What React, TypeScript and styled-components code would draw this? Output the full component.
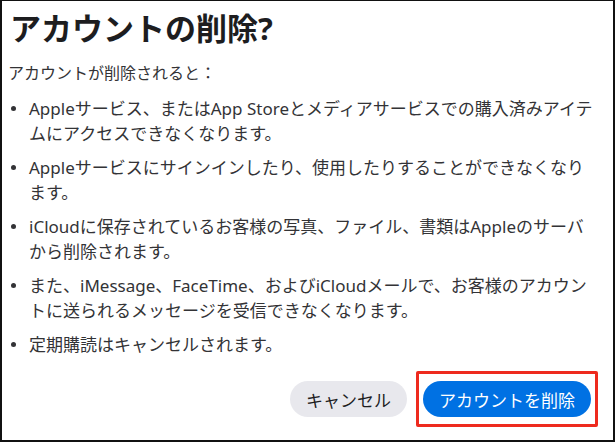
import styled, { createGlobalStyle } from 'styled-components';

const GlobalStyle = createGlobalStyle`
  html, body {
    margin: 0;
    padding: 0;
    background: #ffffff;
  }
  body {
    font-family: "Noto Sans", "Noto Sans CJK JP", sans-serif;
  }
`;

// 改行位置は元の画面に合わせる
const items: string[][] = [
  ['Appleサービス、またはApp Storeとメディアサービスでの購入済みアイテ', 'ムにアクセスできなくなります。'],
  ['Appleサービスにサインインしたり、使用したりすることができなくなり', 'ます。'],
  ['iCloudに保存されているお客様の写真、ファイル、書類はAppleのサーバ', 'から削除されます。'],
  ['また、iMessage、FaceTime、およびiCloudメールで、お客様のアカウン', 'トに送られるメッセージを受信できなくなります。'],
  ['定期購読はキャンセルされます。'],
];

export default function App() {
  return (
    <>
      <GlobalStyle />
      <DialogDiv>
        <TitleH1>アカウントの削除?</TitleH1>
        <IntroP>アカウントが削除されると：</IntroP>
        <ListUl>
          {items.map(lines => (
            <ItemLi key={lines[0]}>
              <BulletSpan />
              <ItemTextDiv>
                {lines.map(line => (
                  <LineSpan key={line}>{line}</LineSpan>
                ))}
              </ItemTextDiv>
            </ItemLi>
          ))}
        </ListUl>
        <FooterDiv>
          <PillButton variant="secondary">キャンセル</PillButton>
          {/* 強調表示の赤枠 */}
          <HighlightDiv>
            <PillButton variant="primary">アカウントを削除</PillButton>
          </HighlightDiv>
        </FooterDiv>
      </DialogDiv>
    </>
  );
}

const DialogDiv = styled.div`
  box-sizing: border-box;
  width: 615px;
  height: 442px;
  border-left: 2px solid #111;
  border-top: 1px solid #111;
  border-right: 2px solid #111;
  border-bottom: 2px solid #111;
  padding: 6px 15px 0 6px;
  display: flex;
  flex-direction: column;
  color: #333336;
`;

const TitleH1 = styled.h1`
  margin: 0 0 0 2px;
  font-size: 31px;
  line-height: 42px;
  font-weight: 700;
  color: #1d1d1f;
`;

const IntroP = styled.p`
  margin: 12px 0 0 0;
  font-size: 16px;
  line-height: 24px;
`;

const ListUl = styled.ul`
  list-style: none;
  margin: 11px 0 0 0;
  padding: 0;
  display: flex;
  flex-direction: column;
  gap: 9px;
`;

const ItemLi = styled.li`
  display: flex;
  align-items: flex-start;
  font-size: 17px;
  line-height: 25px;
`;

const BulletSpan = styled.span`
  flex: none;
  width: 5px;
  height: 5px;
  border-radius: 50%;
  background: #333336;
  margin: 10px 13px 0 3px;
`;

const ItemTextDiv = styled.div`
  flex: 1;
  display: flex;
  flex-direction: column;
`;

const LineSpan = styled.span`
  white-space: nowrap;
`;

const FooterDiv = styled.div`
  margin-top: auto;
  margin-bottom: 13px;
  display: flex;
  justify-content: flex-end;
  align-items: center;
  gap: 9px;
`;

const HighlightDiv = styled.div`
  border: 3px solid #ee2a1e;
  border-radius: 2px;
  padding: 7px 4px;
`;

const PillButton = styled.button<{ variant: 'primary' | 'secondary' }>`
  height: 36px;
  border: none;
  border-radius: 18px;
  padding: 0 16px;
  font-family: "Noto Sans", "Noto Sans CJK JP", sans-serif;
  font-size: 17px;
  background: ${props => (props.variant === 'primary' ? '#0071e3' : '#e8e8ed')};
  color: ${props => (props.variant === 'primary' ? '#ffffff' : '#1d1d1f')};
  cursor: pointer;
`;
